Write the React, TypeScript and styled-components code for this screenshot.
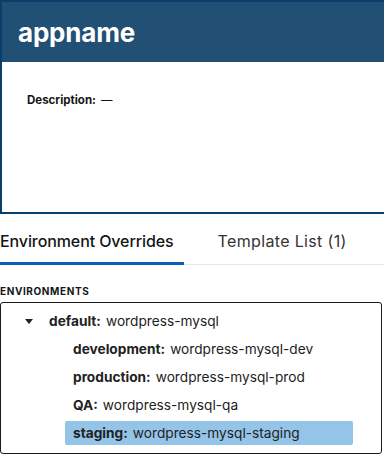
import React from "react";
import styled, { createGlobalStyle } from "styled-components";

const Global = createGlobalStyle`
  html, body { margin: 0; padding: 0; background: #fff; }
  body { font-family: Inter, "Noto Sans", sans-serif; color: #151515; overflow: hidden; }
  * { box-sizing: border-box; }
`;

const Page = styled.div`
  width: 384px;
  height: 458px;
  overflow: hidden;
  display: flex;
  flex-direction: column;
`;

const Card = styled.section`
  flex-shrink: 0;
  width: 400px;
  height: 214px;
  border: 2px solid #0b3f6b;
  border-right: none;
  display: flex;
  flex-direction: column;
`;

const CardHeader = styled.header`
  height: 60px;
  flex-shrink: 0;
  background: #215074;
  display: flex;
  align-items: center;
  padding-left: 16px;
`;

const Title = styled.h1`
  margin: 0;
  color: #fff;
  font-size: 26px;
  font-weight: 700;
  letter-spacing: -0.2px;
`;

const CardBody = styled.div`
  padding: 31px 25px;
  font-size: 11.5px;
  line-height: 14px;
`;

const Label = styled.span`
  font-weight: 700;
  margin-right: 5px;
`;

const Tabs = styled.nav`
  flex-shrink: 0;
  display: flex;
  height: 51px;
  border-bottom: 1px solid #e6e6e6;
`;

const Tab = styled.div<{ $active?: boolean }>`
  height: 51px;
  padding: 6px ${(p) => (p.$active ? "10px" : "32px")} 0 ${(p) => (p.$active ? "0" : "34px")};
  display: flex;
  align-items: center;
  font-size: 16px;
  letter-spacing: ${(p) => (p.$active ? "-0.1px" : "0.35px")};
  color: ${(p) => (p.$active ? "#151515" : "#333")};
  font-weight: ${(p) => (p.$active ? 500 : 400)};
  border-bottom: 3px solid ${(p) => (p.$active ? "#0b5fb5" : "transparent")};
`;

const SectionTitle = styled.h3`
  margin: 20px 0 5px;
  font-size: 10px;
  line-height: 12px;
  font-weight: 700;
  letter-spacing: 0.6px;
`;

const TreeBox = styled.div`
  flex-shrink: 0;
  width: 382px;
  height: 152px;
  border: 1px solid #1a1a1a;
  border-radius: 3px;
  padding: 6px 0;
  display: flex;
  flex-direction: column;
`;

const Row = styled.div<{ $level: number; $selected?: boolean }>`
  flex-shrink: 0;
  height: 24px;
  margin-bottom: 4px;
  display: flex;
  align-items: center;
  font-size: 13.7px;
  color: #222;
  margin-left: ${(p) => (p.$level === 0 ? 22 : 64)}px;
  padding-left: ${(p) => (p.$level === 0 ? 0 : 8)}px;
  width: ${(p) => (p.$level === 0 ? "auto" : "288px")};
  background: ${(p) => (p.$selected ? "#94c4e8" : "transparent")};
  border-radius: 2px;
`;

const Caret = styled.span`
  width: 26px;
  padding-left: 2px;
  display: inline-flex;
  align-items: center;
`;

const Key = styled.span`
  font-weight: 700;
  margin-right: 5px;
`;

const envs = [
  { k: "development", v: "wordpress-mysql-dev" },
  { k: "production", v: "wordpress-mysql-prod" },
  { k: "QA", v: "wordpress-mysql-qa" },
  { k: "staging", v: "wordpress-mysql-staging", sel: true },
];

export default function App() {
  return (
    <Page>
      <Global />
      <Card>
        <CardHeader>
          <Title>appname</Title>
        </CardHeader>
        <CardBody>
          <Label>Description:</Label>—
        </CardBody>
      </Card>
      <Tabs>
        <Tab $active>Environment Overrides</Tab>
        <Tab>Template List (1)</Tab>
      </Tabs>
      <SectionTitle>ENVIRONMENTS</SectionTitle>
      <TreeBox>
        <Row $level={0}>
          <Caret>
            <svg width="8" height="5" viewBox="0 0 8 5">
              <path d="M0 0 L8 0 L4 5 Z" fill="#222" />
            </svg>
          </Caret>
          <Key>default:</Key>wordpress-mysql
        </Row>
        {envs.map((e) => (
          <Row key={e.k} $level={1} $selected={e.sel}>
            <Key>{e.k}:</Key>
            {e.v}
          </Row>
        ))}
      </TreeBox>
    </Page>
  );
}
